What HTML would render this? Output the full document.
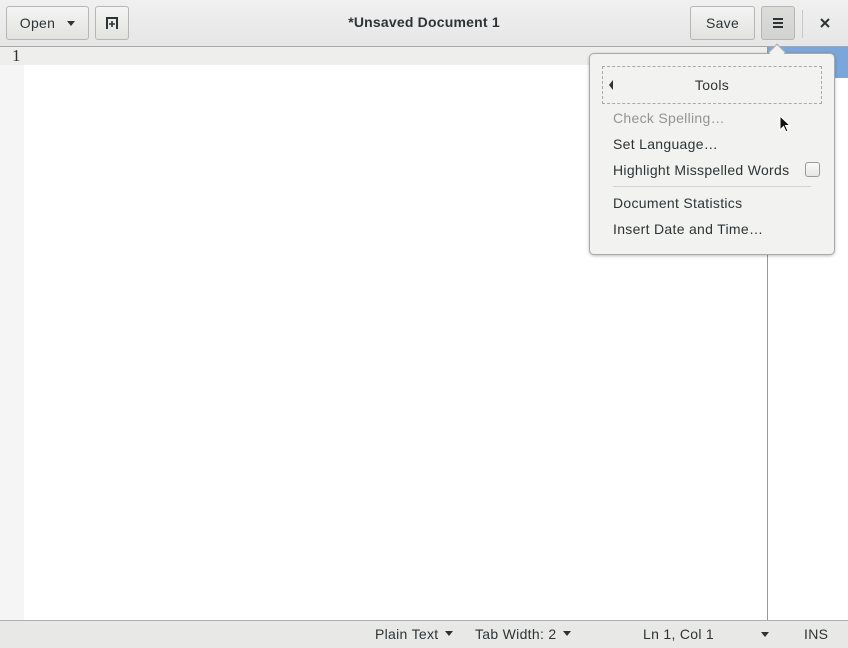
<!DOCTYPE html>
<html><head><style>
*{margin:0;padding:0;box-sizing:border-box}
body{width:848px;height:648px;overflow:hidden;font-family:"Liberation Sans",sans-serif;font-size:14px;color:#2e3436;background:#fff;position:relative;letter-spacing:0.3px}
.hdr{position:absolute;left:0;top:0;width:848px;height:47px;background:linear-gradient(#f0f0f0,#e6e6e6);border-bottom:1px solid #a8a8a8}
.btn{position:absolute;top:6px;height:34px;border:1px solid #b6b6b3;border-radius:3px;background:linear-gradient(#f4f4f4,#e2e2e0);display:flex;align-items:center;justify-content:center}
.tri{display:inline-block;width:0;height:0;border-left:4.5px solid transparent;border-right:4.5px solid transparent;border-top:5px solid #2e3436}
.gut{position:absolute;left:0;top:47px;width:24px;height:573px;background:#f5f5f5}
.cur{position:absolute;left:0;top:47px;width:767px;height:18px;background:#eeeeec}
.sb{position:absolute;left:0;top:620px;width:848px;height:28px;background:#e8e8e7;border-top:1px solid #b0b0b0}
.sb span{position:absolute;top:5px}
.pop{position:absolute;left:589px;top:53px;width:246px;height:202px;background:#f2f2f1;border:1px solid #a9a9a9;border-radius:5px;box-shadow:0 1px 3px rgba(0,0,0,.25)}
.pop .it{position:absolute;left:23px}
</style></head><body>
<div class="hdr">
 <div class="btn" style="left:6px;width:83px"><span>Open</span><span class="tri" style="margin-left:12px"></span></div>
 <div class="btn" style="left:95px;width:34px"><svg width="14" height="14" viewBox="0 0 14 14"><path d="M2 13V2H12V13" fill="none" stroke="#2e3436" stroke-width="2"/><path d="M7 5v6M4 8h6" stroke="#2e3436" stroke-width="1.6"/></svg></div>
 <div style="position:absolute;left:0;width:848px;top:14px;text-align:center;font-weight:bold;font-size:14px;letter-spacing:0.2px">*Unsaved Document 1</div>
 <div class="btn" style="left:690px;width:65px">Save</div>
 <div class="btn" style="left:761px;width:34px;background:linear-gradient(#dcdcdb,#d2d2d0)"><svg width="12" height="12"><path d="M1 2h10M1 6h10M1 10h10" stroke="#2e3436" stroke-width="2"/></svg></div>
 <div style="position:absolute;left:802px;top:10px;width:1px;height:28px;background:#c8c8c8"></div>
 <svg style="position:absolute;left:820px;top:18px" width="10" height="10"><path d="M1 1L9 9M9 1L1 9" stroke="#2e3436" stroke-width="2"/></svg>
</div>
<div class="gut"></div>
<div class="cur"></div>
<div style="position:absolute;left:12px;top:46px;font-family:'Liberation Serif',serif;font-size:17px;letter-spacing:0">1</div>
<div style="position:absolute;left:767px;top:47px;width:1px;height:573px;background:#999"></div>
<div style="position:absolute;left:768px;top:47px;width:80px;height:31px;background:#7aa6dc"></div>
<div class="pop">
 <div style="position:absolute;left:12px;top:12px;width:220px;height:38px;border:1px dashed #aaa;text-align:center;line-height:36px;font-size:14px">Tools
  <span style="position:absolute;left:6px;top:13px;width:0;height:0;border-top:5px solid transparent;border-bottom:5px solid transparent;border-right:4px solid #2e3436"></span></div>
 <div class="it" style="top:56px;color:#929595">Check Spelling…</div>
 <div class="it" style="top:82px">Set Language…</div>
 <div class="it" style="top:108px">Highlight Misspelled Words</div>
 <div style="position:absolute;left:215px;top:108px;width:15px;height:15px;border:1px solid #9a9a9a;border-radius:3px;background:linear-gradient(#fafafa,#e6e6e6)"></div>
 <div style="position:absolute;left:23px;top:132px;width:198px;height:1px;background:#d4d4d4"></div>
 <div class="it" style="top:141px">Document Statistics</div>
 <div class="it" style="top:167px">Insert Date and Time…</div>
</div>
<div style="position:absolute;left:771px;top:46px;width:12px;height:12px;background:#f2f2f1;border-left:1px solid #a9a9a9;border-top:1px solid #a9a9a9;transform:rotate(45deg)"></div>
<svg style="position:absolute;left:779px;top:115px" width="12" height="20"><path d="M1 1V15L4.5 11.5L7 17L9 16L6.5 10.5H11Z" fill="#111" stroke="#fff" stroke-width="1"/></svg>
<div class="sb">
 <span style="left:375px">Plain Text<span class="tri" style="margin-left:7px;vertical-align:middle"></span></span>
 <span style="left:475px">Tab Width: 2<span class="tri" style="margin-left:7px;vertical-align:middle"></span></span>
 <span style="left:643px">Ln 1, Col 1</span>
 <span style="left:761px;top:11px" class="tri"></span>
 <span style="left:804px">INS</span>
</div>
</body></html>
